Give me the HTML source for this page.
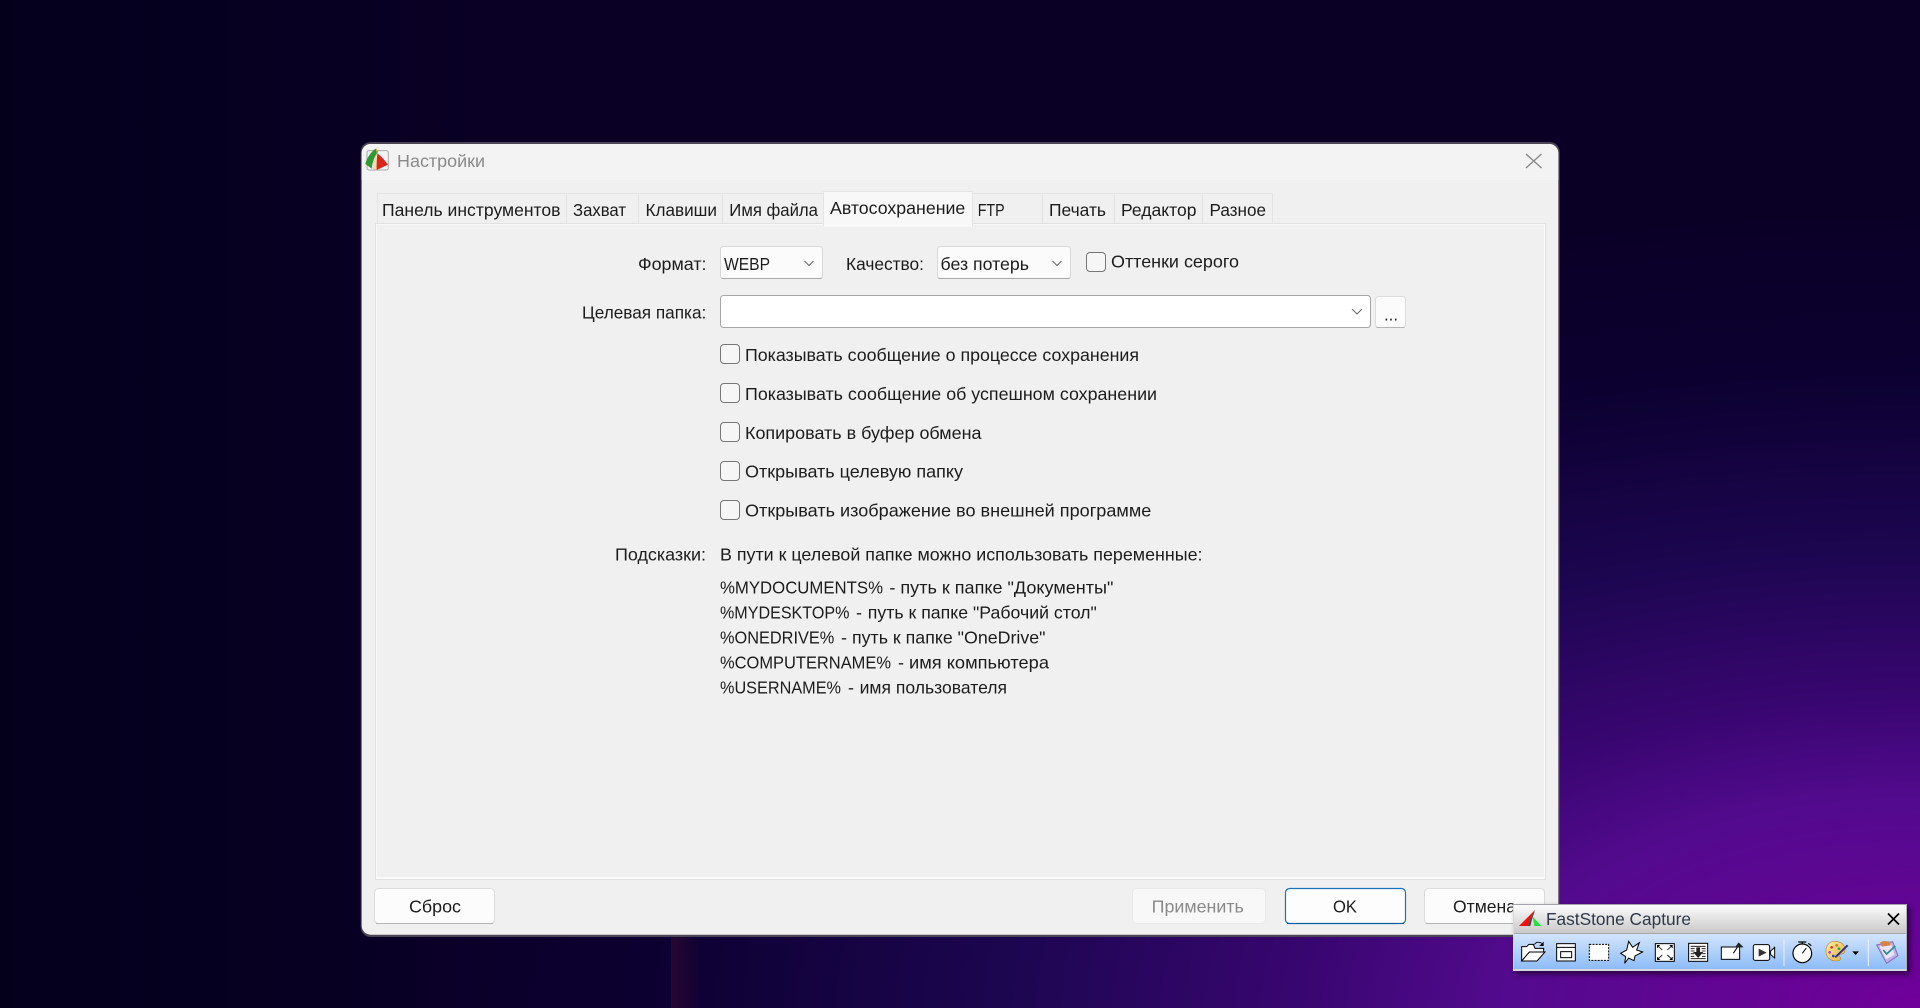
<!DOCTYPE html>
<html lang="ru"><head><meta charset="utf-8"><title>Настройки</title>
<style>
html,body{margin:0;padding:0;background:#0a0026;width:1920px;height:1008px;overflow:hidden}
svg{display:block}
text{font-family:"Liberation Sans",sans-serif;font-size:17.5px;fill:#1c1c1c}
.g{fill:#8a8a8a}
</style></head><body>
<svg width="1920" height="1008" viewBox="0 0 1920 1008" xmlns="http://www.w3.org/2000/svg">
<defs>
<radialGradient id="bgp" gradientUnits="userSpaceOnUse" cx="0" cy="0" r="1" gradientTransform="translate(1920 1008) scale(1600 800)">
<stop offset="0" stop-color="#70009a"/><stop offset=".26" stop-color="#530a8e"/><stop offset=".39" stop-color="#380670"/><stop offset=".575" stop-color="#1c0650"/><stop offset=".8" stop-color="#0c0030"/><stop offset="1" stop-color="#0a0026"/>
</radialGradient>
<linearGradient id="bgl" x1="0" x2="1" y1="0" y2="0"><stop offset="0" stop-color="#02001a" stop-opacity=".8"/><stop offset="1" stop-color="#02001a" stop-opacity="0"/></linearGradient>
<linearGradient id="red" x1="0" x2="1" y1="0" y2="0"><stop offset="0" stop-color="#50102e" stop-opacity=".4"/><stop offset="1" stop-color="#50102e" stop-opacity="0"/></linearGradient>
<linearGradient id="tt" x1="0" x2="0" y1="0" y2="1"><stop offset="0" stop-color="#fbfbfb"/><stop offset="1" stop-color="#c9c9c9"/></linearGradient>
<linearGradient id="tb" x1="0" x2="0" y1="0" y2="1"><stop offset="0" stop-color="#d3e5fd"/><stop offset="1" stop-color="#8dbcf8"/></linearGradient>
<linearGradient id="yel" x1="0" x2="1" y1="0" y2="1"><stop offset="0" stop-color="#fdf0a8"/><stop offset="1" stop-color="#e0b040"/></linearGradient>
<filter id="bl" x="-10%" y="-10%" width="120%" height="120%"><feGaussianBlur stdDeviation="3"/></filter>
</defs>

<rect width="1920" height="1008" fill="url(#bgp)"/>
<rect width="520" height="1008" fill="url(#bgl)"/>
<rect x="671" y="936" width="30" height="72" fill="url(#red)"/>

<!-- dialog -->
<rect x="360.700" y="142" width="1199" height="795" rx="10" fill="#4a4454"/>
<rect x="361.700" y="144" width="1196.600" height="790.700" rx="9" fill="#f0f0f0"/>
<path d="M361.700 180V153a9 9 0 0 1 9-9H1549.300a9 9 0 0 1 9 9V180Z" fill="#f3f3f3"/>

<!-- app icon -->
<g transform="translate(355 138) scale(.3333)">
<rect x="36" y="38" width="64" height="58" rx="6" fill="#f4f4f4" stroke="#a8a8a8" stroke-width="3"/>
<path d="M31 78C36 58 50 40 62 32L66 46C58 56 52 74 50 92Z" fill="#2f9a34"/>
<path d="M62 30L70 42 66 48Z" fill="#e09a20"/>
<path d="M53 92C56 72 60 56 67 46 80 56 92 70 99 80L65 96Z" fill="#d8261c"/>
<path d="M53 92C56 72 60 56 67 46 66 62 64 80 65 96Z" fill="#f2e0b0"/>
</g>
<text x="397" y="167" textLength="88" lengthAdjust="spacingAndGlyphs" class="g">Настройки</text>
<path d="M1526 154L1541.500 168M1541.500 154L1526 168" stroke="#8c8c8c" stroke-width="1.500" fill="none"/>

<!-- panel -->
<rect x="375.500" y="223.500" width="1170" height="656" fill="#f0f0f0" stroke="#e2e2e2"/>
<rect x="376.500" y="224.500" width="1168" height="654" fill="none" stroke="#f9f9f9" stroke-width="1"/>
<rect x="377" y="877" width="1167" height="1.500" fill="#fbfbfb"/>

<!-- tabs -->
<g fill="#f0f0f0" stroke="#e4e4e4">
<path d="M377.500 223V193.500H566.500V223"/>
<path d="M566.500 223V193.500H638.500V223"/>
<path d="M638.500 223V193.500H722.500V223"/>
<path d="M722.500 223V193.500H823.500V223"/>
<path d="M972.500 223V193.500H1042.500V223"/>
<path d="M1042.500 223V193.500H1114.500V223"/>
<path d="M1114.500 223V193.500H1202.500V223"/>
<path d="M1202.500 223V193.500H1272.500V223"/>
</g>
<path d="M823.500 226V191.500H972.500V226" fill="#f8f8f8" stroke="#e4e4e4"/>
<rect x="824" y="222" width="148" height="5" fill="#f8f8f8"/>
<text x="382" y="216" textLength="178.500" lengthAdjust="spacingAndGlyphs">Панель инструментов</text>
<text x="573" y="216" textLength="53" lengthAdjust="spacingAndGlyphs">Захват</text>
<text x="645.500" y="216" textLength="71.500" lengthAdjust="spacingAndGlyphs">Клавиши</text>
<text x="729.300" y="216" textLength="88.700" lengthAdjust="spacingAndGlyphs">Имя файла</text>
<text x="830" y="214" textLength="135.300" lengthAdjust="spacingAndGlyphs">Автосохранение</text>
<text x="977.700" y="216" textLength="27" lengthAdjust="spacingAndGlyphs">FTP</text>
<text x="1049" y="216" textLength="57" lengthAdjust="spacingAndGlyphs">Печать</text>
<text x="1121" y="216" textLength="75.500" lengthAdjust="spacingAndGlyphs">Редактор</text>
<text x="1209.500" y="216" textLength="56.500" lengthAdjust="spacingAndGlyphs">Разное</text>

<!-- row 1 -->
<text x="638" y="270" textLength="68.500" lengthAdjust="spacingAndGlyphs">Формат:</text>
<rect x="720.500" y="246.500" width="102" height="32" rx="3" fill="#fbfbfb" stroke="#d8d8d8"/>
<path d="M721.500 278.500H821.500" stroke="#a8a8a8"/>
<text x="724" y="270" textLength="46" lengthAdjust="spacingAndGlyphs">WEBP</text>
<path d="M804.500 261L809 265.500 813.500 261" fill="none" stroke="#666" stroke-width="1"/>
<text x="846" y="270" textLength="78" lengthAdjust="spacingAndGlyphs">Качество:</text>
<rect x="937.500" y="246.500" width="133" height="32" rx="3" fill="#fbfbfb" stroke="#d8d8d8"/>
<path d="M938.500 278.500H1069.500" stroke="#a8a8a8"/>
<text x="940.500" y="270" textLength="88.500" lengthAdjust="spacingAndGlyphs">без потерь</text>
<path d="M1052.500 261L1057 265.500 1061.500 261" fill="none" stroke="#666" stroke-width="1"/>
<rect x="1086.500" y="252.500" width="19" height="19" rx="3.500" fill="#f6f6f6" stroke="#777"/>
<text x="1111" y="267.600" textLength="128" lengthAdjust="spacingAndGlyphs">Оттенки серого</text>

<!-- row 2 -->
<text x="582" y="318.600" textLength="124.300" lengthAdjust="spacingAndGlyphs">Целевая папка:</text>
<rect x="720.500" y="295.500" width="650" height="32" rx="3" fill="#fff" stroke="#a6a6a6"/>
<path d="M1352 309L1357 314 1362 309" fill="none" stroke="#666" stroke-width="1"/>
<rect x="1375.500" y="296.500" width="30" height="31" rx="3" fill="#fbfbfb" stroke="#dcdcdc"/>
<path d="M1376.500 327.500H1404.500" stroke="#b4b4b4"/>
<text x="1384" y="320.500" textLength="14" lengthAdjust="spacingAndGlyphs">...</text>

<!-- checks -->
<g fill="#f6f6f6" stroke="#777">
<rect x="720.500" y="344.500" width="19" height="19" rx="3.500"/>
<rect x="720.500" y="383.500" width="19" height="19" rx="3.500"/>
<rect x="720.500" y="422.500" width="19" height="19" rx="3.500"/>
<rect x="720.500" y="461.500" width="19" height="19" rx="3.500"/>
<rect x="720.500" y="500.500" width="19" height="19" rx="3.500"/>
</g>
<text x="745" y="361" textLength="394" lengthAdjust="spacingAndGlyphs">Показывать сообщение о процессе сохранения</text>
<text x="745" y="399.800" textLength="412" lengthAdjust="spacingAndGlyphs">Показывать сообщение об успешном сохранении</text>
<text x="745" y="438.800" textLength="236.500" lengthAdjust="spacingAndGlyphs">Копировать в буфер обмена</text>
<text x="745" y="477.700" textLength="218" lengthAdjust="spacingAndGlyphs">Открывать целевую папку</text>
<text x="745" y="516.700" textLength="406.300" lengthAdjust="spacingAndGlyphs">Открывать изображение во внешней программе</text>

<!-- hints -->
<text x="615" y="560.700" textLength="91" lengthAdjust="spacingAndGlyphs">Подсказки:</text>
<text x="720" y="560.700" textLength="482.500" lengthAdjust="spacingAndGlyphs">В пути к целевой папке можно использовать переменные:</text>

<text x="720" y="593.500" textLength="163" lengthAdjust="spacingAndGlyphs">%MYDOCUMENTS%</text>
<text x="889.400" y="593.500" textLength="6" lengthAdjust="spacingAndGlyphs">-</text>
<text x="900.400" y="593.500" textLength="213" lengthAdjust="spacingAndGlyphs">путь к папке "Документы"</text>

<text x="720" y="618.500" textLength="129.400" lengthAdjust="spacingAndGlyphs">%MYDESKTOP%</text>
<text x="856" y="618.500" textLength="6" lengthAdjust="spacingAndGlyphs">-</text>
<text x="867.800" y="618.500" textLength="229" lengthAdjust="spacingAndGlyphs">путь к папке "Рабочий стол"</text>

<text x="720" y="643.500" textLength="114.300" lengthAdjust="spacingAndGlyphs">%ONEDRIVE%</text>
<text x="841" y="643.500" textLength="6" lengthAdjust="spacingAndGlyphs">-</text>
<text x="852" y="643.500" textLength="193.500" lengthAdjust="spacingAndGlyphs">путь к папке "OneDrive"</text>

<text x="720" y="668.500" textLength="171" lengthAdjust="spacingAndGlyphs">%COMPUTERNAME%</text>
<text x="898" y="668.500" textLength="6" lengthAdjust="spacingAndGlyphs">-</text>
<text x="909" y="668.500" textLength="140" lengthAdjust="spacingAndGlyphs">имя компьютера</text>

<text x="720" y="693.500" textLength="121" lengthAdjust="spacingAndGlyphs">%USERNAME%</text>
<text x="848" y="693.500" textLength="6" lengthAdjust="spacingAndGlyphs">-</text>
<text x="859.600" y="693.500" textLength="147.400" lengthAdjust="spacingAndGlyphs">имя пользователя</text>

<!-- buttons -->
<rect x="374.500" y="888.500" width="120" height="35" rx="4" fill="#fcfcfc" stroke="#dcdcdc"/>
<path d="M376 923.500H493" stroke="#b4b4b4"/>
<text x="409" y="912.300" textLength="52" lengthAdjust="spacingAndGlyphs">Сброс</text>
<rect x="1132.500" y="888.500" width="133" height="35" rx="4" fill="#f8f8f8" stroke="#e8e8e8"/>
<text x="1151.700" y="912.300" textLength="92.100" lengthAdjust="spacingAndGlyphs" class="g">Применить</text>
<rect x="1285.500" y="888.500" width="120" height="35" rx="4" fill="#fdfdfd" stroke="#1b72b8" stroke-width="1.200"/>
<path d="M1287 923.500H1404" stroke="#005a9e"/>
<text x="1333" y="912.300" textLength="24" lengthAdjust="spacingAndGlyphs">OK</text>
<rect x="1424.500" y="888.500" width="120" height="35" rx="4" fill="#fcfcfc" stroke="#dcdcdc"/>
<path d="M1426 923.500H1543" stroke="#b4b4b4"/>
<text x="1453" y="912.300" textLength="63" lengthAdjust="spacingAndGlyphs">Отмена</text>

<!-- FastStone toolbar -->
<rect x="1516" y="907" width="394" height="67" fill="#000" opacity=".55" filter="url(#bl)"/>
<rect x="1513" y="904" width="394" height="67" fill="#d8d8e0"/>
<rect x="1514" y="905" width="392" height="28" fill="url(#tt)"/>
<rect x="1514" y="933" width="392" height="1" fill="#a8a8a8"/>
<rect x="1514" y="934" width="392" height="35" fill="url(#tb)"/>
<rect x="1513" y="904" width="394" height="1" fill="#a4a4ac"/>
<rect x="1906" y="904" width="1" height="67" fill="#b0b0b8"/>

<g transform="translate(1500 890) scale(.3333)">
<!-- logo -->
<path d="M57 108L105 60 90 88 84 108Z" fill="#ee1010"/>
<path d="M98 80L124 108H103Z" fill="#22e040"/>
<path d="M105 60L90 88 84 108H91L96 88Z" fill="#444"/>

<g fill="#fff" stroke="#000" stroke-width="3" stroke-linejoin="miter">
<!-- open folder -->
<path d="M65 213V170H80L87 163H100L105 175H131V186"/>
<path d="M65 213L88 186H135L111 213Z"/>
<!-- window -->
<rect x="170" y="161" width="56" height="52"/>
<rect x="182" y="185" width="33" height="18"/>
<!-- rect dashed -->
<rect x="268" y="163" width="58" height="48" stroke-dasharray="6 3.500"/>
<!-- star -->
<path d="M362 190L380 180 386 154 398 172 418 158 410 180 428 186 405 198 402 212 386 204 374 220 377 200Z"/>
<!-- full -->
<rect x="466" y="161" width="57" height="53"/>
<!-- scroll -->
<rect x="566" y="160" width="57" height="54"/>
<!-- fixed -->
<rect x="664" y="171" width="55" height="37"/>
<!-- video -->
<rect x="760" y="164" width="49" height="47" rx="6"/>
<path d="M812 183L824 172V204L812 194Z"/>
</g>
<path d="M171 172H226" stroke="#000" stroke-width="3"/>
<path d="M102 164Q113 151 127 161" fill="none" stroke="#000" stroke-width="2.500"/>
<path d="M131 155V168H118Z" fill="#000"/>
<path d="M474 168L487 180M515 168L502 180M474 207L487 195M515 207L502 195" stroke="#000" stroke-width="2.500" fill="none"/>
<path d="M471 175V165H481ZM518 175V165H508ZM471 200V210H481ZM518 200V210H508Z" fill="#000"/>
<path d="M572 169H617M572 176H584M605 176H617M572 183H584M605 183H617M572 191H582M607 191H617M572 199H583M606 199H617M572 206H617" stroke="#000" stroke-width="2.500"/>
<path d="M589 172H600V186H610L594.500 204 579 186H589Z" fill="#222"/>
<path d="M700 190L712 172" stroke="#000" stroke-width="3"/>
<path d="M716 157L731 172H705Z" fill="#222"/>
<path d="M776 176L800 188 776 200Z" fill="#333"/>
<path d="M852 148V228M1105 148V228" stroke="#eef5ff" stroke-width="3"/>
<!-- timer -->
<circle cx="907" cy="190" r="28" fill="#fff" stroke="#000" stroke-width="3.500"/>
<path d="M895 156H919M907 156V162M925 160L934 167" stroke="#000" stroke-width="3.500" fill="none"/>
<path d="M907 190L919 174" stroke="#000" stroke-width="3"/>
<!-- palette -->
<path d="M1005 154C985 154 977 170 978 186 979 204 996 216 1015 212 1023 210 1024 204 1019 200 1015 196 1018 192 1025 192 1034 192 1037 182 1034 172 1030 160 1018 154 1005 154Z" fill="url(#yel)" stroke="#b88a40" stroke-width="2"/>
<circle cx="995" cy="172" r="4" fill="#e03030"/><circle cx="1010" cy="166" r="4" fill="#e07020"/><circle cx="989" cy="187" r="4" fill="#c030c0"/><circle cx="1000" cy="198" r="4" fill="#3040d0"/><circle cx="1017" cy="176" r="4" fill="#30a040"/>
<path d="M1006 202L1043 166" stroke="#3a2f7a" stroke-width="6"/>
<path d="M1057 184H1077L1067 195Z" fill="#000"/>
<!-- last -->
<path d="M1130 165L1178 155 1194 197 1160 220Z" fill="#c0aee8" stroke="#8070b8" stroke-width="3"/>
<path d="M1138 168L1174 164 1184 194 1158 208Z" fill="#eae4fa"/>
<path d="M1140 158L1150 153 1170 155 1172 166 1146 170Z" fill="#d8824a"/>
<path d="M1150 180L1160 192 1186 168" fill="none" stroke="#2a8a96" stroke-width="5"/>
</g>
<text x="1546" y="925" textLength="145" lengthAdjust="spacingAndGlyphs" style="font-size:17.5px;fill:#2e3848">FastStone Capture</text>
<path d="M1888 913.500L1899 924.500M1899 913.500L1888 924.500" stroke="#000" stroke-width="1.700"/>
</svg>
</body></html>
